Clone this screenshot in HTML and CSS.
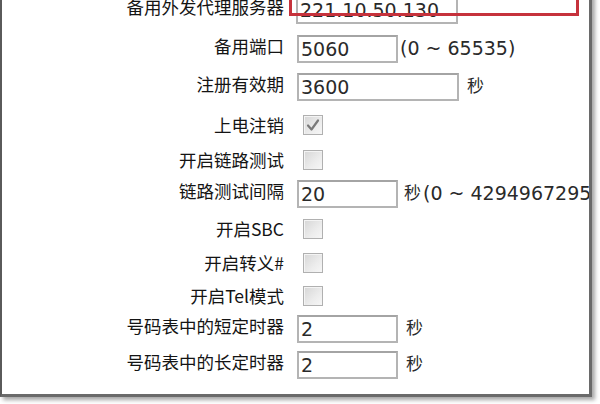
FILE: index.html
```html
<!DOCTYPE html>
<html lang="zh-CN">
<head>
<meta charset="utf-8">
<title>SIP 设置</title>
<link rel="stylesheet" href="styles.css">
</head>
<body>
<div class="frame">
  <div class="form">
    <div class="row r-first">
      <label class="lbl">备用外发代理服务器</label>
      <div class="field">
        <span class="inp long">221.10.50.130</span>
        <span class="mark"></span>
      </div>
    </div>
    <div class="row r-input">
      <label class="lbl">备用端口</label>
      <div class="field"><span class="inp short">5060</span><span class="hint">(0 ~ 65535)</span></div>
    </div>
    <div class="row r-input">
      <label class="lbl">注册有效期</label>
      <div class="field"><span class="inp long">3600</span><span class="unit">秒</span></div>
    </div>
    <div class="row r-check r-tall">
      <label class="lbl">上电注销</label>
      <div class="field"><span class="cb checked"><svg viewBox="0 0 20 20" width="20" height="20"><path d="M5 10.5 L8.5 14.5 L15 5.5" fill="none" stroke="#7a7a7a" stroke-width="2.2" stroke-linecap="round" stroke-linejoin="round"/></svg></span></div>
    </div>
    <div class="row r-check r-short">
      <label class="lbl">开启链路测试</label>
      <div class="field"><span class="cb"></span></div>
    </div>
    <div class="row r-input r-compact">
      <label class="lbl">链路测试间隔</label>
      <div class="field"><span class="inp short">20</span><span class="unit tight">秒</span><span class="hint">(0 ~ 4294967295)</span></div>
    </div>
    <div class="row r-check">
      <label class="lbl">开启SBC</label>
      <div class="field"><span class="cb"></span></div>
    </div>
    <div class="row r-check">
      <label class="lbl">开启转义#</label>
      <div class="field"><span class="cb"></span></div>
    </div>
    <div class="row r-check r-short2">
      <label class="lbl">开启Tel模式</label>
      <div class="field"><span class="cb"></span></div>
    </div>
    <div class="row r-input r-compact">
      <label class="lbl">号码表中的短定时器</label>
      <div class="field"><span class="inp short">2</span><span class="unit">秒</span></div>
    </div>
    <div class="row r-input r-compact">
      <label class="lbl">号码表中的长定时器</label>
      <div class="field"><span class="inp short">2</span><span class="unit">秒</span></div>
    </div>
  </div>
</div>
</body>
</html>
```
FILE: styles.css
```css
html, body {
  margin: 0;
  padding: 0;
  background: #ffffff;
  overflow: hidden;
}
body {
  width: 600px;
  height: 404px;
  font-family: "DejaVu Sans", "Noto Sans CJK SC", sans-serif;
  color: #222;
}
.frame {
  box-sizing: border-box;
  width: 592px;
  height: 421px;
  margin-top: -24px;
  border-left: 2px solid #5a5a5a;
  border-right: 3px solid #6a6a6a;
  border-bottom: 3px solid #6a6a6a;
  box-shadow: 3px 3px 4px rgba(0,0,0,0.35);
  background: #fff;
  overflow: hidden;
}
.form {
  padding-top: 13px;
  display: flex;
  flex-direction: column;
}
.row {
  display: grid;
  grid-template-columns: 282px 1fr;
  column-gap: 12px;
  align-items: center;
}
.r-first { height: 41px; }
.r-input { height: 38px; }
.r-check { height: 34px; }
.r-tall { height: 38px; }
.r-short { height: 32px; }
.r-short2 { height: 31px; }
.r-compact { height: 36px; }
.lbl {
  text-align: right;
  font-family: "Noto Sans CJK SC", sans-serif;
  font-size: 17.5px;
  line-height: 20px;
  color: #141414;
  white-space: nowrap;
}
.r-input .lbl, .r-first .lbl { padding-bottom: 6px; }
.field {
  position: relative;
  display: flex;
  align-items: center;
  white-space: nowrap;
}
.inp {
  box-sizing: border-box;
  display: inline-block;
  height: 28px;
  border: 2px solid #b4b4b4;
  border-top-color: #a4a4a4;
  background: #fff;
  font-size: 19px;
  line-height: 24px;
  padding: 0 2px;
  color: #2a2a2a;
  margin-left: 1px;
}
.inp.short { width: 101px; }
.inp.long { width: 162px; }
.r-first .inp { margin-left: 0; }
.hint {
  font-size: 19px;
  color: #2a2a2a;
  margin-left: 2px;
  padding-bottom: 2px;
}
.unit {
  font-family: "Noto Sans CJK SC", sans-serif;
  font-size: 17px;
  color: #2a2a2a;
  margin-left: 8px;
  padding-bottom: 6px;
}
.unit.tight { margin-left: 6px; }
.cb {
  box-sizing: border-box;
  display: inline-block;
  width: 20px;
  height: 20px;
  margin-left: 7px;
  border: 1.5px solid #b0b0b0;
  background: linear-gradient(135deg, #d6d6d6 0%, #ececec 60%, #f6f6f6 100%);
  box-shadow: inset 1px 1px 0 #f4f4f4;
  position: relative;
}
.cb svg {
  position: absolute;
  left: -1.5px;
  top: -1.5px;
}
.mark {
  position: absolute;
  left: -7px;
  top: -40px;
  width: 290px;
  height: 60px;
  border: 3px solid #c6323c;
  box-sizing: border-box;
}
```
